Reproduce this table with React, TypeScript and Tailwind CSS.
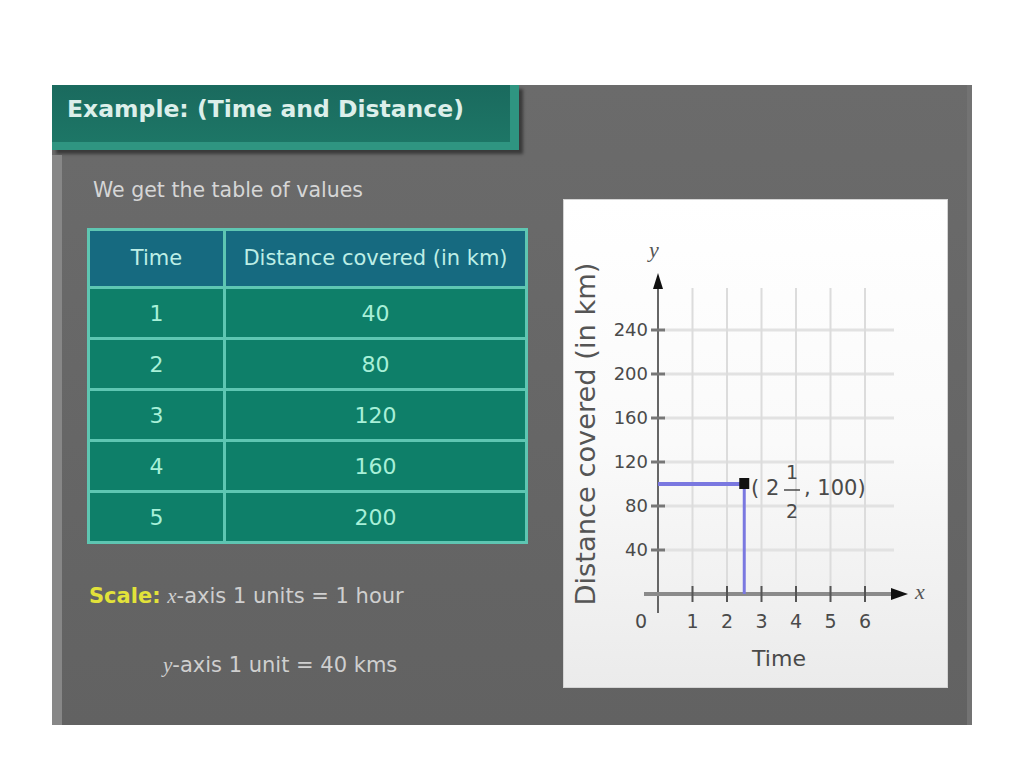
const rows = [
  { t: "1", d: "40" },
  { t: "2", d: "80" },
  { t: "3", d: "120" },
  { t: "4", d: "160" },
  { t: "5", d: "200" },
];

// chart geometry (panel coordinates)
const ox = 94;
const oy = 394;
const ux = 34.5;
const uy = 1.1;
const yTicks = [40, 80, 120, 160, 200, 240];
const xTicks = [1, 2, 3, 4, 5, 6];

function Chart() {
  const px = ox + 2.5 * ux;
  const py = oy - 100 * uy;
  return (
    <svg width="385" height="489" viewBox="0 0 385 489" className="block">
      {/* grid */}
      {yTicks.map((v) => (
        <line key={`h${v}`} x1={100} x2={330} y1={oy - v * uy} y2={oy - v * uy} stroke="#e2e2e2" strokeWidth={3} />
      ))}
      {xTicks.map((v) => (
        <line key={`v${v}`} x1={ox + v * ux} x2={ox + v * ux} y1={88} y2={oy} stroke="#dcdcdc" strokeWidth={2} />
      ))}

      {/* axes */}
      <line x1={ox} x2={ox} y1={84} y2={413} stroke="#666" strokeWidth={2} />
      <polygon points={`${ox},73 ${ox - 5},89 ${ox + 5},89`} fill="#111" />
      <line x1={80} x2={330} y1={oy} y2={oy} stroke="#8a8a8a" strokeWidth={4} />
      <polygon points={`344,${oy} 327,${oy - 6} 327,${oy + 6}`} fill="#111" />

      {yTicks.map((v) => (
        <line key={`yt${v}`} x1={87} x2={101} y1={oy - v * uy} y2={oy - v * uy} stroke="#777" strokeWidth={3} />
      ))}
      {xTicks.map((v) => (
        <line key={`xt${v}`} x1={ox + v * ux} x2={ox + v * ux} y1={386} y2={402} stroke="#555" strokeWidth={2} />
      ))}

      <g fontFamily="'DejaVu Sans', sans-serif" fill="#4a4a4a">
        {yTicks.map((v) => (
          <text key={`yl${v}`} x={84} y={oy - v * uy + 6} fontSize={18} textAnchor="end">
            {v}
          </text>
        ))}
        <text x={77} y={428} fontSize={19} textAnchor="middle">0</text>
        {xTicks.map((v) => (
          <text key={`xl${v}`} x={ox + v * ux} y={428} fontSize={19} textAnchor="middle">
            {v}
          </text>
        ))}
        <text x={215} y={466} fontSize={22} textAnchor="middle">Time</text>
        <text
          x={0}
          y={0}
          fontSize={26}
          fill="#555"
          textAnchor="middle"
          textLength={343}
          lengthAdjust="spacingAndGlyphs"
          transform="translate(31 234) rotate(-90)"
        >
          Distance covered (in km)
        </text>

        {/* point label */}
        <text x={187} y={295} fontSize={21}>(</text>
        <text x={202} y={295} fontSize={21}>2</text>
        <text x={228} y={279} fontSize={19} textAnchor="middle">1</text>
        <line x1={220} x2={236} y1={290} y2={290} stroke="#4a4a4a" strokeWidth={1.5} />
        <text x={228} y={318} fontSize={19} textAnchor="middle">2</text>
        <text x={240} y={295} fontSize={21}>, 100)</text>
      </g>

      <g fontFamily="'Liberation Serif', serif" fontStyle="italic" fill="#555" fontSize={22}>
        <text x={90} y={57} textAnchor="middle">y</text>
        <text x={356} y={399} textAnchor="middle">x</text>
      </g>

      {/* blue guide lines */}
      <line x1={ox} x2={px} y1={py} y2={py} stroke="#7a78e0" strokeWidth={4} />
      <line x1={px} x2={px} y1={py} y2={oy} stroke="#7a78e0" strokeWidth={3} />
      <rect x={px - 5} y={py - 6} width={10} height={11} fill="#111" />
    </svg>
  );
}

export default function App() {
  return (
    <div className="w-[1024px] h-[768px] bg-white pt-[85px] pl-[52px] font-['DejaVu_Sans',sans-serif]">
      <div className="w-[920px] h-[640px] flex flex-col bg-gradient-to-b from-[#6b6b6b] to-[#626262] border-r-[5px] border-[#737373]">
        {/* Title bar */}
        <div className="w-[470px] h-[70px] shrink-0">
          <div className="w-[467px] h-[65px] bg-gradient-to-b from-[#1a6a5e] to-[#1d7666] border-b-[8px] border-r-[9px] border-[#2f9581] shadow-[4px_4px_3px_rgba(0,0,0,0.45)] pl-[15px] pt-[10px]">
            <h1 className="text-[23.5px] leading-[28px] font-bold text-[#dcefea] whitespace-nowrap">
              Example: (Time and Distance)
            </h1>
          </div>
        </div>

        {/* Body */}
        <div className="flex-1 flex items-start border-l-[10px] border-[#878787] pl-[25px] pt-[23px]">
          <div className="w-[441px] shrink-0">
            <p className="pl-[6px] text-[20.5px] leading-[24px] text-[#d6d6d6] whitespace-nowrap">
              We get the table of values
            </p>

            <div className="mt-[26px] bg-[#5ec6b2] p-[3px] grid grid-cols-[133px_1fr] gap-[3px]">
              <div className="h-[55px] bg-[#166a80] flex items-center justify-center text-[21px] text-[#bdeee6]">
                Time
              </div>
              <div className="h-[55px] bg-[#166a80] flex items-center justify-center text-[21px] text-[#bdeee6] whitespace-nowrap">
                Distance covered (in km)
              </div>
              {rows.map((r) => (
                <div key={r.t} className="contents">
                  <div className="h-[48px] bg-[#0e7f69] flex items-center justify-center text-[22px] text-[#a8f0d8]">
                    {r.t}
                  </div>
                  <div className="h-[48px] bg-[#0e7f69] flex items-center justify-center text-[22px] text-[#a8f0d8]">
                    {r.d}
                  </div>
                </div>
              ))}
            </div>

            <p className="mt-[40px] pl-[2px] text-[21px] leading-[24px] text-[#cfcfcf] whitespace-nowrap">
              <span className="font-bold text-[#e2e23a]">Scale:</span>{" "}
              <i className="font-['Liberation_Serif',serif]">x</i>-axis 1 units = 1 hour
            </p>
            <p className="mt-[45px] pl-[76px] text-[21px] leading-[24px] text-[#cfcfcf] whitespace-nowrap">
              <i className="font-['Liberation_Serif',serif]">y</i>-axis 1 unit = 40 kms
            </p>
          </div>

          {/* Graph panel */}
          <div className="ml-[35px] mt-[21px] w-[385px] h-[489px] shrink-0 bg-gradient-to-b from-white via-[#fafafa] to-[#ebebeb] border border-[#d4d4d4]">
            <Chart />
          </div>
        </div>
      </div>
    </div>
  );
}
